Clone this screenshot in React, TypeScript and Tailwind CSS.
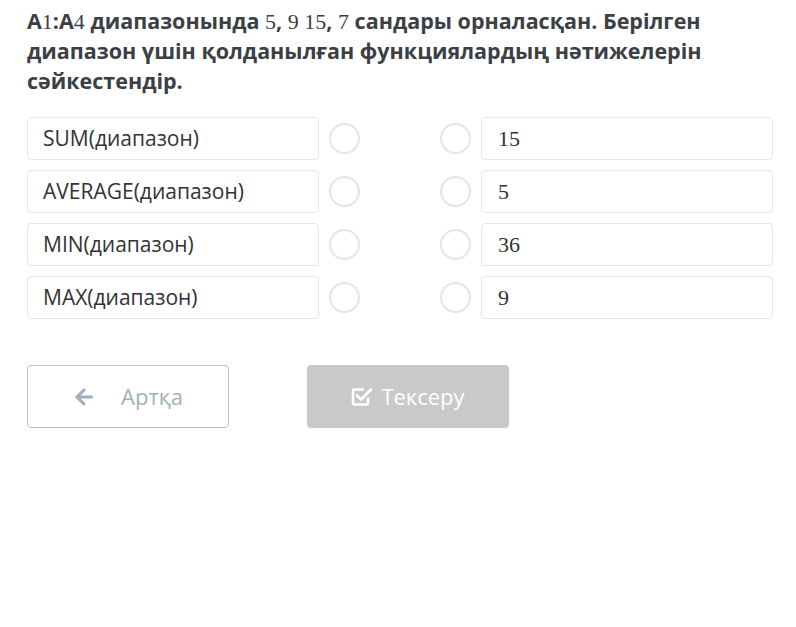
import React from 'react';

const leftItems = ['SUM(диапазон)', 'AVERAGE(диапазон)', 'MIN(диапазон)', 'MAX(диапазон)'];
const rightItems = ['15', '5', '36', '9'];

const M: React.FC<{ children: React.ReactNode }> = ({ children }) => (
  <span className="font-normal text-[22px] leading-none" style={{ fontFamily: '"Liberation Serif", serif' }}>
    {children}
  </span>
);

const Circle = () => (
  <div className="w-[31px] h-[31px] rounded-full border-2 border-[#e1e6e6] bg-white shrink-0" />
);

export default function App() {
  return (
    <div
      className="w-[796px] h-[627px] bg-white pl-[27px] pr-[23px] pt-[6px]"
      style={{ fontFamily: '"Open Sans", sans-serif' }}
    >
      <h1 className="text-[21.5px] leading-[30px] font-bold text-[#3b4045] whitespace-nowrap">
        A<M>1</M>:A<M>4</M> диапазонында <M>5</M>, <M>9</M> <M>15</M>, <M>7</M> сандары орналасқан. Берілген
        <br />
        диапазон үшін қолданылған функциялардың нәтижелерін
        <br />
        сәйкестендір.
      </h1>

      <div className="mt-[21px] flex flex-col gap-[10px]">
        {leftItems.map((item, i) => (
          <div key={item} className="flex items-center h-[43px]">
            <div className="w-[292px] h-full flex items-center px-[15px] border border-[#e3e7e8] rounded-[4px] text-[21px] text-[#333]">
              {item}
            </div>
            <div className="ml-[10px]">
              <Circle />
            </div>
            <div className="flex-1" />
            <Circle />
            <div className="ml-[10px] w-[292px] h-full flex items-center px-[16px] border border-[#e3e7e8] rounded-[4px] text-[22px] text-[#333]">
              <span style={{ fontFamily: '"Liberation Serif", serif' }}>{rightItems[i]}</span>
            </div>
          </div>
        ))}
      </div>

      <div className="mt-[46px] flex gap-[78px]">
        <button className="w-[202px] h-[63px] border border-[#b3c2c8] rounded-[4px] bg-white flex items-center justify-center gap-[26px] text-[22px] text-[#9eb1ba]">
          <svg width="22" height="20" viewBox="0 0 448 512" fill="#9eb1ba">
            <path d="M257.5 445.1l-22.2 22.2c-9.4 9.4-24.6 9.4-33.9 0L7 273c-9.4-9.4-9.4-24.6 0-33.9L201.4 44.7c9.4-9.4 24.6-9.4 33.9 0l22.2 22.2c9.5 9.5 9.3 25-.4 34.3L136.6 216H424c13.3 0 24 10.7 24 24v32c0 13.3-10.7 24-24 24H136.6l120.5 114.8c9.8 9.3 10 24.8.4 34.3z" />
          </svg>
          <span>Артқа</span>
        </button>
        <button className="w-[202px] h-[63px] rounded-[4px] bg-[#c9c9c9] flex items-center justify-center gap-[8px] text-[22px] text-white">
          <svg width="22" height="21" viewBox="0 0 22 20" fill="none" stroke="white" strokeWidth="2.6">
            <path d="M17 11v5.5a1.5 1.5 0 0 1-1.5 1.5h-12A1.5 1.5 0 0 1 2 16.5v-12A1.5 1.5 0 0 1 3.5 3H13" strokeLinejoin="round" />
            <path d="M6 9l4 4 10-10" strokeLinecap="round" strokeLinejoin="round" />
          </svg>
          <span>Тексеру</span>
        </button>
      </div>
    </div>
  );
}
